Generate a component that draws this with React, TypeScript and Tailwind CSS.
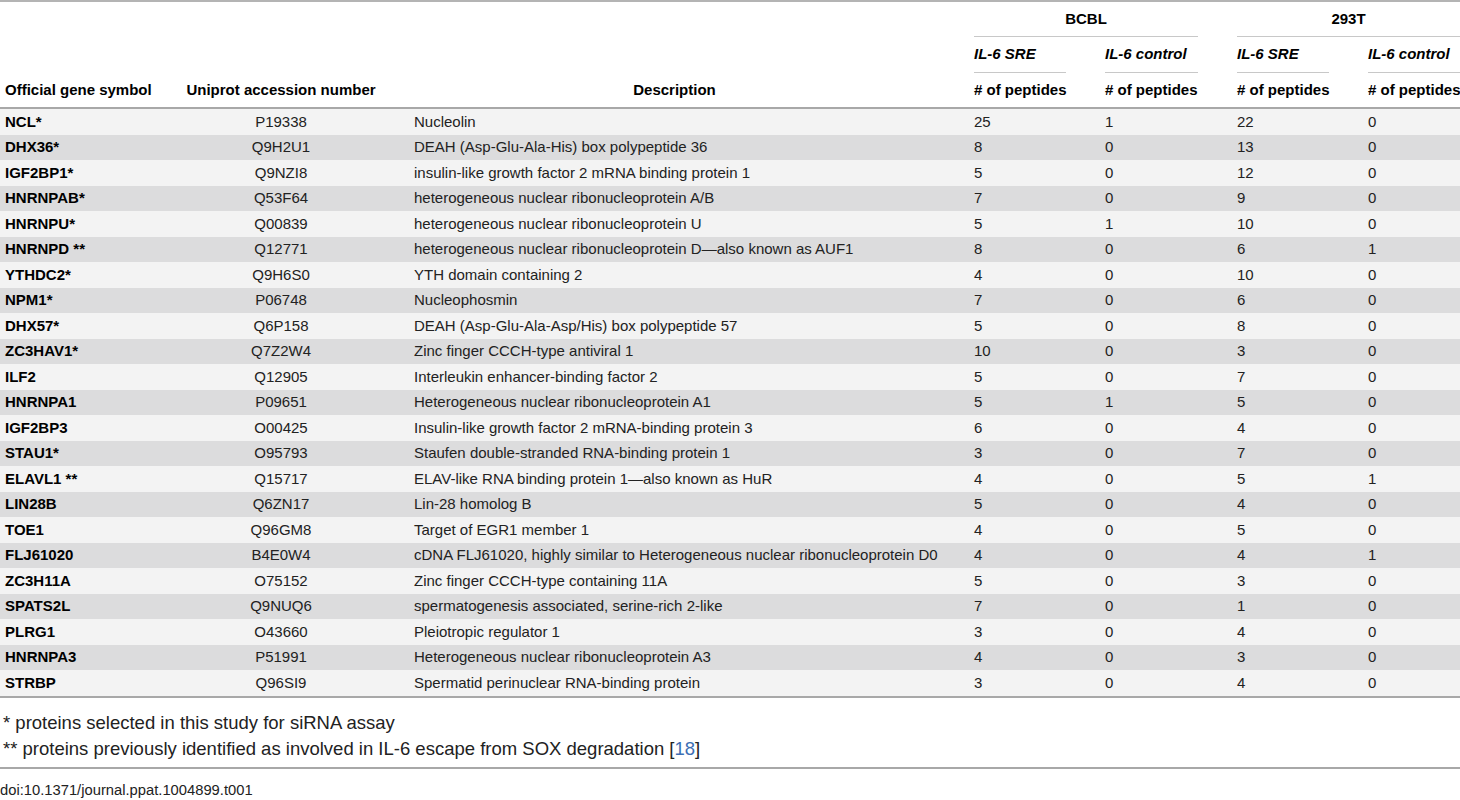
import React from 'react';

type Row = {
  gene: string;
  uniprot: string;
  desc: string;
  bcblSre: string;
  bcblCtl: string;
  t293Sre: string;
  t293Ctl: string;
};

const rows: Row[] = [
  { gene: 'NCL*', uniprot: 'P19338', desc: 'Nucleolin', bcblSre: '25', bcblCtl: '1', t293Sre: '22', t293Ctl: '0' },
  { gene: 'DHX36*', uniprot: 'Q9H2U1', desc: 'DEAH (Asp-Glu-Ala-His) box polypeptide 36', bcblSre: '8', bcblCtl: '0', t293Sre: '13', t293Ctl: '0' },
  { gene: 'IGF2BP1*', uniprot: 'Q9NZI8', desc: 'insulin-like growth factor 2 mRNA binding protein 1', bcblSre: '5', bcblCtl: '0', t293Sre: '12', t293Ctl: '0' },
  { gene: 'HNRNPAB*', uniprot: 'Q53F64', desc: 'heterogeneous nuclear ribonucleoprotein A/B', bcblSre: '7', bcblCtl: '0', t293Sre: '9', t293Ctl: '0' },
  { gene: 'HNRNPU*', uniprot: 'Q00839', desc: 'heterogeneous nuclear ribonucleoprotein U', bcblSre: '5', bcblCtl: '1', t293Sre: '10', t293Ctl: '0' },
  { gene: 'HNRNPD **', uniprot: 'Q12771', desc: 'heterogeneous nuclear ribonucleoprotein D\u2014also known as AUF1', bcblSre: '8', bcblCtl: '0', t293Sre: '6', t293Ctl: '1' },
  { gene: 'YTHDC2*', uniprot: 'Q9H6S0', desc: 'YTH domain containing 2', bcblSre: '4', bcblCtl: '0', t293Sre: '10', t293Ctl: '0' },
  { gene: 'NPM1*', uniprot: 'P06748', desc: 'Nucleophosmin', bcblSre: '7', bcblCtl: '0', t293Sre: '6', t293Ctl: '0' },
  { gene: 'DHX57*', uniprot: 'Q6P158', desc: 'DEAH (Asp-Glu-Ala-Asp/His) box polypeptide 57', bcblSre: '5', bcblCtl: '0', t293Sre: '8', t293Ctl: '0' },
  { gene: 'ZC3HAV1*', uniprot: 'Q7Z2W4', desc: 'Zinc finger CCCH-type antiviral 1', bcblSre: '10', bcblCtl: '0', t293Sre: '3', t293Ctl: '0' },
  { gene: 'ILF2', uniprot: 'Q12905', desc: 'Interleukin enhancer-binding factor 2', bcblSre: '5', bcblCtl: '0', t293Sre: '7', t293Ctl: '0' },
  { gene: 'HNRNPA1', uniprot: 'P09651', desc: 'Heterogeneous nuclear ribonucleoprotein A1', bcblSre: '5', bcblCtl: '1', t293Sre: '5', t293Ctl: '0' },
  { gene: 'IGF2BP3', uniprot: 'O00425', desc: 'Insulin-like growth factor 2 mRNA-binding protein 3', bcblSre: '6', bcblCtl: '0', t293Sre: '4', t293Ctl: '0' },
  { gene: 'STAU1*', uniprot: 'O95793', desc: 'Staufen double-stranded RNA-binding protein 1', bcblSre: '3', bcblCtl: '0', t293Sre: '7', t293Ctl: '0' },
  { gene: 'ELAVL1 **', uniprot: 'Q15717', desc: 'ELAV-like RNA binding protein 1\u2014also known as HuR', bcblSre: '4', bcblCtl: '0', t293Sre: '5', t293Ctl: '1' },
  { gene: 'LIN28B', uniprot: 'Q6ZN17', desc: 'Lin-28 homolog B', bcblSre: '5', bcblCtl: '0', t293Sre: '4', t293Ctl: '0' },
  { gene: 'TOE1', uniprot: 'Q96GM8', desc: 'Target of EGR1 member 1', bcblSre: '4', bcblCtl: '0', t293Sre: '5', t293Ctl: '0' },
  { gene: 'FLJ61020', uniprot: 'B4E0W4', desc: 'cDNA FLJ61020, highly similar to Heterogeneous nuclear ribonucleoprotein D0', bcblSre: '4', bcblCtl: '0', t293Sre: '4', t293Ctl: '1' },
  { gene: 'ZC3H11A', uniprot: 'O75152', desc: 'Zinc finger CCCH-type containing 11A', bcblSre: '5', bcblCtl: '0', t293Sre: '3', t293Ctl: '0' },
  { gene: 'SPATS2L', uniprot: 'Q9NUQ6', desc: 'spermatogenesis associated, serine-rich 2-like', bcblSre: '7', bcblCtl: '0', t293Sre: '1', t293Ctl: '0' },
  { gene: 'PLRG1', uniprot: 'O43660', desc: 'Pleiotropic regulator 1', bcblSre: '3', bcblCtl: '0', t293Sre: '4', t293Ctl: '0' },
  { gene: 'HNRNPA3', uniprot: 'P51991', desc: 'Heterogeneous nuclear ribonucleoprotein A3', bcblSre: '4', bcblCtl: '0', t293Sre: '3', t293Ctl: '0' },
  { gene: 'STRBP', uniprot: 'Q96SI9', desc: 'Spermatid perinuclear RNA-binding protein', bcblSre: '3', bcblCtl: '0', t293Sre: '4', t293Ctl: '0' },
];

// shared column template so header and body line up
const cols =
  'grid grid-cols-[143px_188px_521px_92px_93px_92px_92px] gap-x-[39px] pl-[5px]';

export default function App() {
  return (
    <div
      className="w-[1460px] h-[800px] overflow-hidden bg-white text-[#222] text-[15px]"
      style={{ fontFamily: '"Liberation Sans", Arial, sans-serif' }}
    >
      {/* header */}
      <div className="border-t-2 border-[#b4b4b4] border-b-2 border-b-[#a8a8a8]">
        <div className={`${cols} font-bold text-black`}>
          {/* row 1: cell lines */}
          <div className="col-start-4 col-span-2 h-[35px] flex items-center justify-center border-b border-[#c8c8c8]">
            BCBL
          </div>
          <div className="col-start-6 col-span-2 h-[35px] flex items-center justify-center border-b border-[#c8c8c8]">
            293T
          </div>
          {/* row 2: probes */}
          <div className="col-start-4 h-[36px] flex items-center italic border-b border-[#c8c8c8]">IL-6 SRE</div>
          <div className="h-[36px] flex items-center italic border-b border-[#c8c8c8]">IL-6 control</div>
          <div className="h-[36px] flex items-center italic border-b border-[#c8c8c8]">IL-6 SRE</div>
          <div className="h-[36px] flex items-center italic border-b border-[#c8c8c8] whitespace-nowrap">IL-6 control</div>
          {/* row 3: column titles */}
          <div className="h-[34px] flex items-center whitespace-nowrap">Official gene symbol</div>
          <div className="h-[34px] flex items-center justify-center whitespace-nowrap">Uniprot accession number</div>
          <div className="h-[34px] flex items-center justify-center">Description</div>
          <div className="h-[34px] flex items-center whitespace-nowrap"># of peptides</div>
          <div className="h-[34px] flex items-center whitespace-nowrap"># of peptides</div>
          <div className="h-[34px] flex items-center whitespace-nowrap"># of peptides</div>
          <div className="h-[34px] flex items-center whitespace-nowrap"># of peptides</div>
        </div>
      </div>

      {/* body */}
      <div className="border-b-2 border-[#a8a8a8]">
        {rows.map((r, i) => (
          <div
            key={r.gene}
            className={`${cols} h-[25.5px] items-center ${
              i % 2 === 0 ? 'bg-[#f3f3f3]' : 'bg-[#dcdcdd]'
            }`}
          >
            <div className="font-bold text-black whitespace-nowrap">{r.gene}</div>
            <div className="text-center">{r.uniprot}</div>
            <div className="whitespace-nowrap">{r.desc}</div>
            <div>{r.bcblSre}</div>
            <div>{r.bcblCtl}</div>
            <div>{r.t293Sre}</div>
            <div>{r.t293Ctl}</div>
          </div>
        ))}
      </div>

      {/* footnotes */}
      <div className="pt-[12px] pb-[5px] pl-[3px] text-[18.5px] leading-[26px] border-b-2 border-[#a8a8a8]">
        <p>* proteins selected in this study for siRNA assay</p>
        <p>
          ** proteins previously identified as involved in IL-6 escape from SOX degradation [
          <span className="text-[#3c6eb4]">18</span>]
        </p>
      </div>
      <p className="pt-[12px] text-[14.75px] leading-[18px]">doi:10.1371/journal.ppat.1004899.t001</p>
    </div>
  );
}
